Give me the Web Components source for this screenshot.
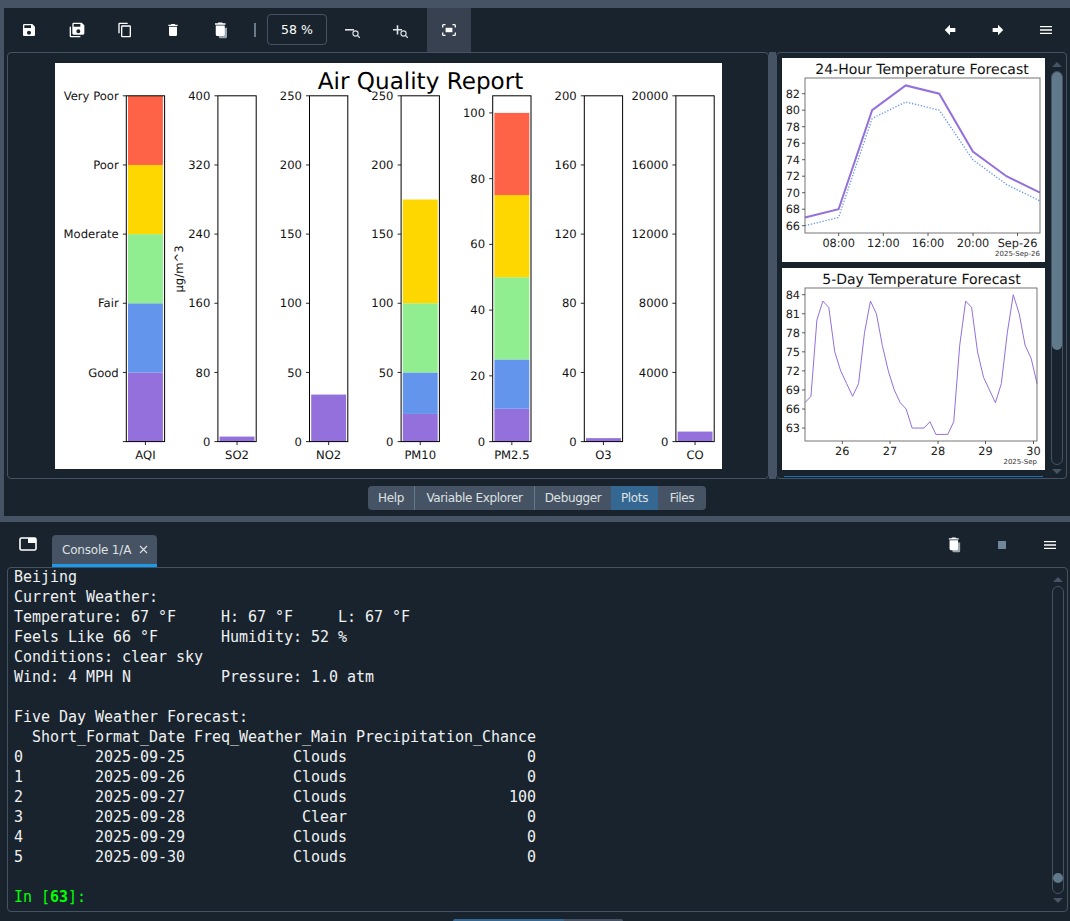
<!DOCTYPE html>
<html>
<head>
<meta charset="utf-8">
<title>Spyder</title>
<style>
    html, body { margin: 0; height: 100%; background: #19232D; overflow: hidden; }
</style>
</head>
<body>
<sp-app></sp-app>
<script>
const ICONS = {
    save: '<path fill="#fff" d="M17 3H5c-1.11 0-2 .9-2 2v14c0 1.1.89 2 2 2h14c1.1 0 2-.9 2-2V7l-4-4zm-5 16c-1.66 0-3-1.34-3-3s1.34-3 3-3 3 1.34 3 3-1.34 3-3 3zm3-10H5V5h10v4z"/>',
    saveAll: '<path fill="#fff" d="M17,7V3H7V7H17M14,17A3,3 0 0,0 17,14A3,3 0 0,0 14,11A3,3 0 0,0 11,14A3,3 0 0,0 14,17M19,1L23,5V17A2,2 0 0,1 21,19H7C5.89,19 5,18.1 5,17V3A2,2 0 0,1 7,1H19M1,7H3V21H17V23H3A2,2 0 0,1 1,21V7Z"/>',
    copy: '<path fill="#fff" d="M19,21H8V7H19M19,5H8A2,2 0 0,0 6,7V21A2,2 0 0,0 8,23H19A2,2 0 0,0 21,21V7A2,2 0 0,0 19,5M16,1H4A2,2 0 0,0 2,3V17H4V3H16V1Z"/>',
    trash: '<path fill="#fff" d="M19,4H15.5L14.5,3H9.5L8.5,4H5V6H19M6,19A2,2 0 0,0 8,21H16A2,2 0 0,0 18,19V7H6V19Z"/>',
    trashAll: '<path fill="#9aa5ae" d="M9,9H20V21A2,2 0 0,1 18,23H11A2,2 0 0,1 9,21Z"/><path fill="#fff" d="M18,3H14.5L13.5,2H8.5L7.5,3H4V5H18M5,18A2,2 0 0,0 7,20H15A2,2 0 0,0 17,18V6H5V18Z"/>',
    zoomOut: '<rect x="0" y="6" width="9" height="1.6" fill="#dfe3e6"/><circle cx="10.5" cy="10.5" r="2.6" fill="none" stroke="#dfe3e6" stroke-width="1.1"/><path d="M12.5 12.5L15 15" stroke="#dfe3e6" stroke-width="1.2"/>',
    zoomIn: '<path d="M0 6.8H9M4.5 2.2V11.4" stroke="#dfe3e6" stroke-width="1.6"/><circle cx="10.5" cy="10.5" r="2.6" fill="none" stroke="#dfe3e6" stroke-width="1.1"/><path d="M12.5 12.5L15 15" stroke="#dfe3e6" stroke-width="1.2"/>',
    fit: '<rect x="3.6" y="3.8" width="6.8" height="4.4" fill="#fff"/><path d="M.7 3.5V1.6Q.7 .7 1.6 .7H3.5M10.5 .7H12.4Q13.3 .7 13.3 1.6V3.5M13.3 8.5V10.4Q13.3 11.3 12.4 11.3H10.5M3.5 11.3H1.6Q.7 11.3 .7 10.4V8.5" fill="none" stroke="#fff" stroke-width="1.3"/>',
    left: '<path fill="#fff" d="M20,9V15H12V19.84L4.16,12L12,4.16V9H20Z"/>',
    right: '<path fill="#fff" d="M4,15V9H12V4.16L19.84,12L12,19.84V15H4Z"/>',
    menu: '<path fill="#fff" d="M3,6H21V8H3V6M3,11H21V13H3V11M3,16H21V18H3V16Z"/>',
    pane: '<rect x="1" y="1" width="16" height="12" rx="1.5" fill="none" stroke="#fff" stroke-width="1.6"/><rect x="9" y="1" width="8" height="5" fill="#fff"/>',
    stop: '<rect x="0" y="0" width="8" height="8" fill="#6f8798"/>'
};

class SpButton extends HTMLElement {
    connectedCallback() {
        const icon = this.getAttribute('icon');
        const size = this.getAttribute('size') || 16;
        const box = this.getAttribute('box') || '0 0 24 24';
        this.attachShadow({ mode: 'open' });
        this.shadowRoot.innerHTML = `
            <style>
                :host { display: flex; align-items: center; justify-content: center; width: 48px; height: 44px; flex: none; }
                :host([active]) { width: 44px; background: #37414F; margin-left: 3px; }
                svg { display: block; }
            </style>
            <svg width="${size}" height="${size}" viewBox="${box}">${ICONS[icon]}</svg>
        `;
    }
}
customElements.define('sp-button', SpButton);

class SpToolbar extends HTMLElement {
    connectedCallback() {
        this.attachShadow({ mode: 'open' });
        this.shadowRoot.innerHTML = `
            <style>
                :host { display: flex; align-items: center; height: 44px; flex: none; padding-left: 1px; }
                .spacer { flex: 1; }
                .sep { width: 2px; height: 14px; background: #6b7a88; margin: 0 11px 0 9px; flex: none; }
                .spin {
                    box-sizing: border-box; width: 60px; height: 31px; margin-top: -1px; margin-right: 1px; flex: none;
                    border: 1px solid #455364; border-radius: 4px;
                    display: flex; align-items: center; justify-content: center;
                    font: 12.5px "DejaVu Sans", sans-serif; color: #fff;
                }
            </style>
            <sp-button icon="save"></sp-button>
            <sp-button icon="saveAll"></sp-button>
            <sp-button icon="copy"></sp-button>
            <sp-button icon="trash"></sp-button>
            <sp-button icon="trashAll" size="18"></sp-button>
            <div class="sep"></div>
            <div class="spin">58 %</div>
            <sp-button icon="zoomOut" size="15" box="0 0 15 15"></sp-button>
            <sp-button icon="zoomIn" size="15" box="0 0 15 15"></sp-button>
            <sp-button icon="fit" size="14" box="0 0 14 12" active></sp-button>
            <div class="spacer"></div>
            <sp-button icon="left"></sp-button>
            <sp-button icon="right"></sp-button>
            <sp-button icon="menu"></sp-button>
        `;
    }
}
customElements.define('sp-toolbar', SpToolbar);

class SpScrollbar extends HTMLElement {
    connectedCallback() {
        this.attachShadow({ mode: 'open' });
        const before = this.getAttribute('before') || 0;
        const thumb = this.getAttribute('thumb') || 0;
        this.shadowRoot.innerHTML = `
            <style>
                :host { display: flex; flex-direction: column; align-items: center; width: 12px; flex: none; }
                .arrow { width: 0; height: 0; border-left: 5px solid transparent; border-right: 5px solid transparent; flex: none; }
                .up { border-bottom: 5px solid #455364; margin-bottom: 4px; }
                .down { border-top: 5px solid #455364; margin-top: 4px; }
                .track {
                    flex: 1; width: 100%; box-sizing: border-box; border: 1px solid #455364; border-radius: 6px;
                    display: flex; flex-direction: column;
                }
                .pad { height: ${before}px; flex: none; }
                .thumb { margin: 0; height: ${thumb}px; background: #60798B; border-radius: 5px; flex: none; }
            </style>
            <div class="arrow up"></div>
            <div class="track"><div class="pad"></div><div class="thumb"></div></div>
            <div class="arrow down"></div>
        `;
    }
}
customElements.define('sp-scrollbar', SpScrollbar);

class AirQualityChart extends HTMLElement {
    connectedCallback() {
        const colors = ['#9370DB', '#6495ED', '#90EE90', '#FFD700', '#FF6347'];
        const columns = [
            { name: 'AQI', max: 5, ticks: [[0, ''], [1, 'Good'], [2, 'Fair'], [3, 'Moderate'], [4, 'Poor'], [5, 'Very Poor']], bars: [0, 1, 2, 3, 4, 5] },
            { name: 'SO2', max: 400, ticks: [0, 80, 160, 240, 320, 400], bars: [0, 5.8] },
            { name: 'NO2', max: 250, ticks: [0, 50, 100, 150, 200, 250], bars: [0, 34] },
            { name: 'PM10', max: 250, ticks: [0, 50, 100, 150, 200, 250], bars: [0, 20, 50, 100, 175] },
            { name: 'PM2.5', max: 105.2, ticks: [0, 20, 40, 60, 80, 100], bars: [0, 10, 25, 50, 75, 100] },
            { name: 'O3', max: 200, ticks: [0, 40, 80, 120, 160, 200], bars: [0, 2] },
            { name: 'CO', max: 20000, ticks: [0, 4000, 8000, 12000, 16000, 20000], bars: [0, 580] }
        ];
        const top = 32.8, bottom = 378.6, width = 38.3, step = 91.6;
        let out = '';
        columns.forEach((col, i) => {
            const left = 71.3 + i * step;
            const y = v => bottom - (bottom - top) * v / col.max;
            for (let b = 0; b < col.bars.length - 1; b++) {
                out += `<rect x="${left + 1.7}" y="${y(col.bars[b + 1])}" width="${width - 3.4}" height="${y(col.bars[b]) - y(col.bars[b + 1])}" fill="${colors[b]}"/>`;
            }
            out += `<rect x="${left}" y="${top}" width="${width}" height="${bottom - top}" fill="none" stroke="#000" stroke-width="1"/>`;
            col.ticks.forEach(t => {
                const [v, label] = Array.isArray(t) ? t : [t, t];
                out += `<path d="M${left - 3.5} ${y(v)}H${left}" stroke="#111" stroke-width=".9"/>`;
                out += `<text x="${left - 7.6}" y="${y(v) + 4.1}" text-anchor="end">${label}</text>`;
            });
            const mid = left + width / 2;
            out += `<path d="M${mid} ${bottom}v3.5" stroke="#111" stroke-width=".9"/>`;
            out += `<text x="${mid}" y="396" text-anchor="middle">${col.name}</text>`;
        });
        this.attachShadow({ mode: 'open' });
        this.shadowRoot.innerHTML = `
            <style>
                :host { display: block; width: 667px; height: 406px; background: #fff; flex: none; }
                svg { display: block; }
                text { font: 11.6px "DejaVu Sans", sans-serif; fill: #111; text-rendering: geometricPrecision; }
                .title { font-size: 23.1px; fill: #000; }
            </style>
            <svg width="667" height="406" viewBox="0 0 667 406">
                <text class="title" x="365.5" y="26" text-anchor="middle">Air Quality Report</text>
                <text x="0" y="0" text-anchor="middle" transform="translate(127.8 206) rotate(-90)">µg/m^3</text>
                ${out}
            </svg>
        `;
    }
}
customElements.define('air-quality-chart', AirQualityChart);

class ForecastChart extends HTMLElement {
    connectedCallback() {
        const cfg = ForecastChart.CONFIG[this.getAttribute('kind')];
        const { left, right, top, bottom, h } = cfg;
        const y = cfg.y;
        const line = (vals, dx) => vals.map((v, i) => `${(left + i * dx).toFixed(2)},${y(v).toFixed(2)}`).join(' ');
        let out = '';
        cfg.series.forEach(s => {
            out += `<polyline points="${line(s.vals, s.dx)}" fill="none" stroke="${s.color}" stroke-width="${s.w}" stroke-dasharray="${s.dash || 'none'}"/>`;
        });
        out += `<rect x="${left}" y="${top}" width="${right - left}" height="${bottom - top}" fill="none" stroke="#666" stroke-width=".9"/>`;
        cfg.yTicks.forEach(v => {
            out += `<path d="M${left - 3} ${y(v)}H${left}" stroke="#333" stroke-width=".8"/>`;
            out += `<text x="${left - 5}" y="${y(v) + 4.2}" text-anchor="end">${v}</text>`;
        });
        cfg.xTicks.forEach(([x, label]) => {
            out += `<path d="M${x} ${bottom}v3" stroke="#333" stroke-width=".8"/>`;
            out += `<text x="${x}" y="${bottom + 14}" text-anchor="middle">${label}</text>`;
        });
        this.attachShadow({ mode: 'open' });
        this.shadowRoot.innerHTML = `
            <style>
                :host { display: block; width: 263px; height: ${h}px; background: #fff; flex: none; }
                svg { display: block; }
                text { font: 11.3px "DejaVu Sans", sans-serif; fill: #222; text-rendering: geometricPrecision; }
                .title { font-size: 14px; fill: #111; }
                .note { font-size: 7px; fill: #333; }
            </style>
            <svg width="263" height="${h}" viewBox="0 0 263 ${h}">
                <text class="title" x="${cfg.titleX}" y="15.5" text-anchor="middle">${cfg.title}</text>
                ${out}
                <text class="note" x="${right}" y="${cfg.noteY}" text-anchor="end">${cfg.note}</text>
            </svg>
        `;
    }
}
ForecastChart.CONFIG = {
    day: {
        title: '24-Hour Temperature Forecast', titleX: 140, note: '2025-Sep-26', noteY: 198,
        left: 23, right: 258, top: 20, bottom: 175, h: 204,
        y: v => 35.7 + (82 - v) * 8.25,
        yTicks: [66, 68, 70, 72, 74, 76, 78, 80, 82],
        xTicks: [[56.7, '08:00'], [101.3, '12:00'], [146, '16:00'], [191, '20:00'], [235.5, 'Sep-26']],
        series: [
            { vals: [66, 67, 79, 81, 80, 74, 71, 69], dx: 33.57, color: '#6495ED', w: 1.3, dash: '1.3 1.7' },
            { vals: [67, 68, 80, 83, 82, 75, 72, 70], dx: 33.57, color: '#9370DB', w: 2 }
        ]
    },
    week: {
        title: '5-Day Temperature Forecast', titleX: 139.5, note: '2025-Sep', noteY: 196,
        left: 23, right: 255, top: 20, bottom: 173, h: 202,
        y: v => 26.7 + (84 - v) * 6.35,
        yTicks: [63, 66, 69, 72, 75, 78, 81, 84],
        xTicks: [[60.3, '26'], [108, '27'], [156, '28'], [203.5, '29'], [251.5, '30']],
        series: [
            { vals: [67, 68, 80, 83, 82, 75, 72, 70, 68, 70, 78, 83, 81, 76, 72, 69, 67, 66, 63, 63, 63, 64, 62, 62, 62, 64, 76, 83, 82, 75, 71, 69, 67, 70, 78, 84, 81, 76, 74, 70], dx: 5.95, color: '#9370DB', w: 1 }
        ]
    }
};
customElements.define('forecast-chart', ForecastChart);

class SpPlotsPane extends HTMLElement {
    connectedCallback() {
        this.attachShadow({ mode: 'open' });
        this.shadowRoot.innerHTML = `
            <style>
                :host { display: flex; flex: 1; min-height: 0; padding: 0 3px 0 3px; }
                .canvas {
                    box-sizing: border-box; width: 762px; flex: none;
                    border: 1px solid #455364; border-radius: 4px;
                    display: flex; align-items: center; justify-content: center;
                }
                .splitter { width: 7px; flex: none; background: #455364; }
                .thumbs {
                    box-sizing: border-box; flex: 1; display: flex; gap: 6px; padding: 5px 3px 0 5px;
                    border: 1px solid #455364; border-radius: 4px;
                }
                .list { display: flex; flex-direction: column; gap: 6px; width: 263px; flex: none; }
                .selected { height: 1px; margin: 0 2px; background: #1A72BB; }
                sp-scrollbar { margin: 4px 0 4px 0; }
            </style>
            <div class="canvas"><air-quality-chart></air-quality-chart></div>
            <div class="splitter"></div>
            <div class="thumbs">
                <div class="list">
                    <forecast-chart kind="day"></forecast-chart>
                    <forecast-chart kind="week"></forecast-chart>
                    <div class="selected"></div>
                </div>
                <sp-scrollbar thumb="278"></sp-scrollbar>
            </div>
        `;
    }
}
customElements.define('sp-plots-pane', SpPlotsPane);

class SpTabs extends HTMLElement {
    connectedCallback() {
        this.attachShadow({ mode: 'open' });
        this.shadowRoot.innerHTML = `
            <style>
                :host { display: flex; justify-content: center; padding: 7px 0 6px 0; flex: none; }
                .bar { display: flex; height: 24px; border-radius: 4px; overflow: hidden; }
                ::slotted(sp-tab) { border-left: 1px solid #60798B; }
                ::slotted(sp-tab:first-child) { border-left: 0; }
                ::slotted(sp-tab[selected]) { border-left: 0; }
            </style>
            <div class="bar"><slot></slot></div>
        `;
    }
}
customElements.define('sp-tabs', SpTabs);

class SpTab extends HTMLElement {
    connectedCallback() {
        const width = this.getAttribute('width');
        this.attachShadow({ mode: 'open' });
        this.shadowRoot.innerHTML = `
            <style>
                :host {
                    display: flex; align-items: center; justify-content: center; box-sizing: border-box;
                    width: ${width}px; background: #455364;
                    font: 12px "DejaVu Sans", sans-serif; letter-spacing: -.36px; color: #DFE1E2;
                }
                :host([selected]) { background: #346792; }
                :host([bare]) { border-left: 0 !important; }
            </style>
            <slot></slot>
        `;
    }
}
customElements.define('sp-tab', SpTab);

class SpConsole extends HTMLElement {
    connectedCallback() {
        const text = [
            'Beijing',
            'Current Weather:',
            'Temperature: 67 °F     H: 67 °F     L: 67 °F',
            'Feels Like 66 °F       Humidity: 52 %',
            'Conditions: clear sky',
            'Wind: 4 MPH N          Pressure: 1.0 atm',
            '',
            'Five Day Weather Forecast:',
            '  Short_Format_Date Freq_Weather_Main Precipitation_Chance',
            '0        2025-09-25            Clouds                    0',
            '1        2025-09-26            Clouds                    0',
            '2        2025-09-27            Clouds                  100',
            '3        2025-09-28             Clear                    0',
            '4        2025-09-29            Clouds                    0',
            '5        2025-09-30            Clouds                    0',
            ''
        ].join('\n');
        this.attachShadow({ mode: 'open' });
        this.shadowRoot.innerHTML = `
            <style>
                :host { display: flex; flex-direction: column; height: 399px; background: #19232D; flex: none; }
                .head { display: flex; align-items: flex-end; height: 45px; flex: none; }
                .pane { display: flex; width: 52px; height: 32px; padding: 2px 0 0 19px; box-sizing: border-box; flex: none; }
                .tab {
                    box-sizing: border-box; width: 105px; height: 32px; flex: none; padding: 0 0 0 10px;
                    background: #455364; border-bottom: 3px solid #1A9AE8; border-radius: 4px 4px 0 0;
                    display: flex; align-items: center; gap: 8px;
                    font: 12px "DejaVu Sans", sans-serif; letter-spacing: -.2px; color: #DFE1E2;
                }
                .tab span { white-space: nowrap; }
                .tab svg { flex: none; }
                .spacer { flex: 1; }
                .tools { display: flex; height: 45px; align-items: center; margin-right: -4px; }
                .tools sp-button { height: 42px; }
                .frame {
                    box-sizing: border-box; height: 345px; margin: 0 2px 0 7px; flex: none;
                    border: 1px solid #455364; border-radius: 4px;
                    display: flex;
                }
                pre {
                    flex: 1; margin: -1px 0 0; padding: 0 0 0 6px; white-space: pre;
                    font: 15px/20px "DejaVu Sans Mono", monospace; letter-spacing: -.03px; color: #EEF1F2;
                }
                .prompt { color: #00FF00; }
                .prompt b { font-weight: bold; }
                sp-scrollbar { margin: 9px 3px 8px 0; }
                .foot { display: flex; height: 9px; flex: none; justify-content: flex-start; padding-left: 453px; align-items: flex-end; }
                .foot i { display: block; height: 2px; }
                .foot i:first-child { width: 111px; background: #346792; border-radius: 3px 0 0 0; }
                .foot i:last-child { width: 59px; background: #455364; border-radius: 0 3px 0 0; }
            </style>
            <div class="head">
                <div class="pane"><svg width="18" height="14" viewBox="0 0 18 14">${ICONS.pane}</svg></div>
                <div class="tab"><span>Console 1/A</span><svg width="9" height="9" viewBox="0 0 9 9"><path d="M1 1L8 8M8 1L1 8" stroke="#DFE1E2" stroke-width="1.1"/></svg></div>
                <div class="spacer"></div>
                <div class="tools">
                    <sp-button icon="trashAll" size="17"></sp-button>
                    <sp-button icon="stop" size="8" box="0 0 8 8"></sp-button>
                    <sp-button icon="menu"></sp-button>
                </div>
            </div>
            <div class="frame">
                <pre>${text}
<span class="prompt">In [<b>63</b>]:</span></pre>
                <sp-scrollbar before="286" thumb="10"></sp-scrollbar>
            </div>
            <div class="foot"><i></i><i></i></div>
        `;
    }
}
customElements.define('sp-console', SpConsole);

class SpApp extends HTMLElement {
    connectedCallback() {
        this.attachShadow({ mode: 'open' });
        this.shadowRoot.innerHTML = `
            <style>
                :host { display: flex; flex-direction: column; width: 1070px; height: 921px; background: #455364; }
                .plots {
                    height: 508px; margin: 8px 0 6px 4px; background: #19232D; flex: none;
                    display: flex; flex-direction: column;
                }
            </style>
            <div class="plots">
                <sp-toolbar></sp-toolbar>
                <sp-plots-pane></sp-plots-pane>
                <sp-tabs>
                    <sp-tab width="46">Help</sp-tab>
                    <sp-tab width="120">Variable Explorer</sp-tab>
                    <sp-tab width="77">Debugger</sp-tab>
                    <sp-tab width="47" selected>Plots</sp-tab>
                    <sp-tab width="48" bare>Files</sp-tab>
                </sp-tabs>
            </div>
            <sp-console></sp-console>
        `;
    }
}
customElements.define('sp-app', SpApp);
</script>
</body>
</html>
